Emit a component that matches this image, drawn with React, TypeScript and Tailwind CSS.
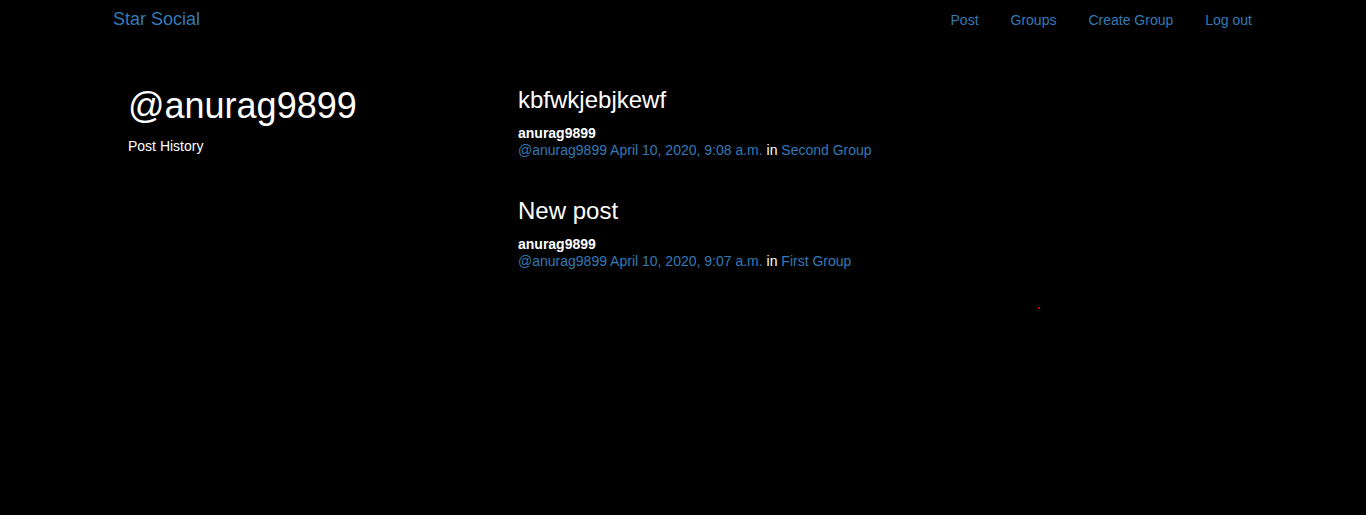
const font = { fontFamily: '"Liberation Sans", Arial, sans-serif' };

interface Post {
  title: string;
  user: string;
  date: string;
  group: string;
}

const posts: Post[] = [
  { title: "kbfwkjebjkewf", user: "anurag9899", date: "April 10, 2020, 9:08 a.m.", group: "Second Group" },
  { title: "New post", user: "anurag9899", date: "April 10, 2020, 9:07 a.m.", group: "First Group" },
];

export default function App() {
  return (
    <div className="relative min-h-[515px] bg-black text-white" style={font}>
      {/* Navbar */}
      <nav className="mx-auto flex h-[40px] w-[1170px] items-start justify-between">
        <a className="mt-[9px] pl-[15px] text-[18px] leading-[20px] text-[#337ab7]">Star Social</a>
        <ul className="mt-[10px] flex text-[14px] leading-[20px] text-[#337ab7]">
          <li className="px-[16px]">Post</li>
          <li className="px-[16px]">Groups</li>
          <li className="px-[16px]">Create Group</li>
          <li className="px-[16px]">Log out</li>
        </ul>
      </nav>

      {/* Body */}
      <div className="mx-auto flex w-[1170px] pl-[30px]">
        <div className="w-[390px] shrink-0">
          <h1 className="mt-[46px] text-[36px] leading-[40px]">@anurag9899</h1>
          <p className="mt-[10px] text-[14px] leading-[20px]">Post History</p>
        </div>
        <div className="flex flex-col">
          {posts.map((p, i) => (
            <div key={i} className={i === 0 ? "mt-[46px]" : "mt-[37px]"}>
              <h2 className="text-[24px] leading-[28px]">{p.title}</h2>
              <div className="mt-[12px] text-[14px] font-bold leading-[14px]">{p.user}</div>
              <div className="text-[14px] leading-[20px] text-[#337ab7]">
                @{p.user} {p.date} <span className="text-white">in</span> {p.group}
              </div>
            </div>
          ))}
        </div>
      </div>

      <span className="absolute left-[1038px] top-[307px] h-[2px] w-[2px] bg-[#c00000]" />
    </div>
  );
}
